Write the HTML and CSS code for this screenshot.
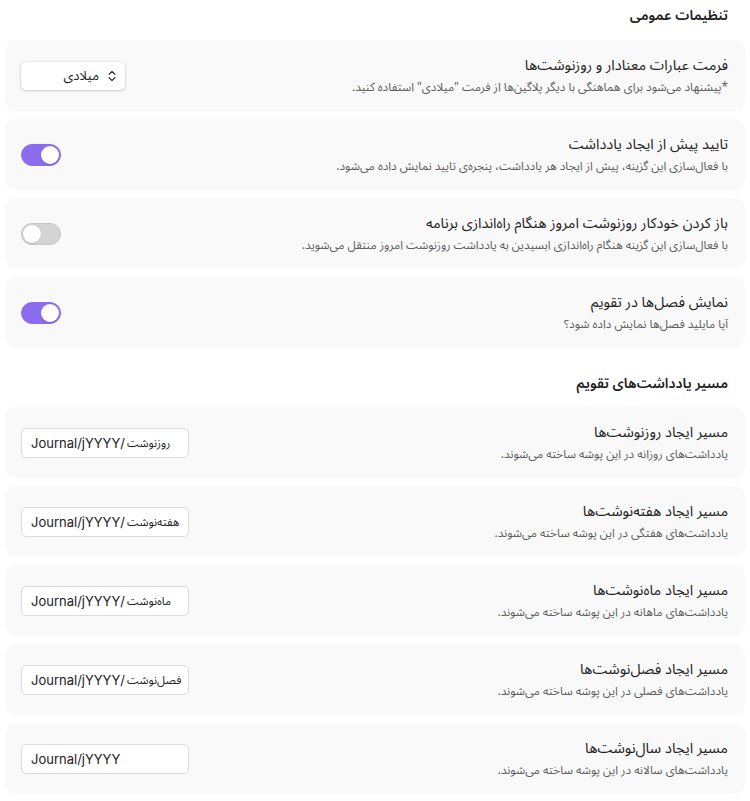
FILE: index.html
```html
<!DOCTYPE html>
<html lang="fa">
<head>
<meta charset="utf-8">
<title>تنظیمات</title>
<link rel="stylesheet" href="styles.css">
</head>
<body>
<div class="page" dir="rtl">
  <h2 class="heading">تنظیمات عمومی</h2>

  <div class="item">
    <div class="info">
      <div class="name">فرمت عبارات معنادار و روزنوشت‌ها</div>
      <div class="desc">*پیشنهاد می‌شود برای هماهنگی با دیگر پلاگین‌ها از فرمت "میلادی" استفاده کنید.</div>
    </div>
    <div class="select">
      <svg class="chev" viewBox="0 0 10 14" width="10" height="14"><path d="M2.2 5.2 L5 2.4 L7.8 5.2 M2.2 8.8 L5 11.6 L7.8 8.8" fill="none" stroke="#333" stroke-width="1.3" stroke-linecap="round" stroke-linejoin="round"/></svg>
      <span>میلادی</span>
    </div>
  </div>

  <div class="item">
    <div class="info">
      <div class="name">تایید پیش از ایجاد یادداشت</div>
      <div class="desc">با فعال‌سازی این گزینه، پیش از ایجاد هر یادداشت، پنجره‌ی تایید نمایش داده می‌شود.</div>
    </div>
    <div class="toggle on"><span class="knob"></span></div>
  </div>

  <div class="item">
    <div class="info">
      <div class="name">باز کردن خودکار روزنوشت امروز هنگام راه‌اندازی برنامه</div>
      <div class="desc">با فعال‌سازی این گزینه هنگام راه‌اندازی ابسیدین به یادداشت روزنوشت امروز منتقل می‌شوید.</div>
    </div>
    <div class="toggle"><span class="knob"></span></div>
  </div>

  <div class="item">
    <div class="info">
      <div class="name">نمایش فصل‌ها در تقویم</div>
      <div class="desc">آیا مایلید فصل‌ها نمایش داده شود؟</div>
    </div>
    <div class="toggle on"><span class="knob"></span></div>
  </div>

  <h2 class="heading second">مسیر یادداشت‌های تقویم</h2>

  <div class="item">
    <div class="info">
      <div class="name">مسیر ایجاد روزنوشت‌ها</div>
      <div class="desc">یادداشت‌های روزانه در این پوشه ساخته می‌شوند.</div>
    </div>
    <div class="text" dir="ltr"><span class="lat">Journal/jYYYY/</span><span class="fa">روزنوشت</span></div>
  </div>

  <div class="item">
    <div class="info">
      <div class="name">مسیر ایجاد هفته‌نوشت‌ها</div>
      <div class="desc">یادداشت‌های هفتگی در این پوشه ساخته می‌شوند.</div>
    </div>
    <div class="text" dir="ltr"><span class="lat">Journal/jYYYY/</span><span class="fa">هفته‌نوشت</span></div>
  </div>

  <div class="item">
    <div class="info">
      <div class="name">مسیر ایجاد ماه‌نوشت‌ها</div>
      <div class="desc">یادداشت‌های ماهانه در این پوشه ساخته می‌شوند.</div>
    </div>
    <div class="text" dir="ltr"><span class="lat">Journal/jYYYY/</span><span class="fa">ماه‌نوشت</span></div>
  </div>

  <div class="item">
    <div class="info">
      <div class="name">مسیر ایجاد فصل‌نوشت‌ها</div>
      <div class="desc">یادداشت‌های فصلی در این پوشه ساخته می‌شوند.</div>
    </div>
    <div class="text" dir="ltr"><span class="lat">Journal/jYYYY/</span><span class="fa">فصل‌نوشت</span></div>
  </div>

  <div class="item">
    <div class="info">
      <div class="name">مسیر ایجاد سال‌نوشت‌ها</div>
      <div class="desc">یادداشت‌های سالانه در این پوشه ساخته می‌شوند.</div>
    </div>
    <div class="text" dir="ltr"><span class="lat">Journal/jYYYY</span></div>
  </div>
</div>
</body>
</html>
```

FILE: styles.css
```css
html, body {
  margin: 0;
  padding: 0;
  background: #ffffff;
}

body {
  font-family: "Noto Sans Arabic", "Noto Sans", "DejaVu Sans", sans-serif;
  color: #222222;
}

.page {
  padding: 5px 5px 0 5px;
  display: flex;
  flex-direction: column;
  gap: 8px;
}

.heading {
  margin: 0 17px 5px 17px;
  font-size: 14px;
  line-height: 22px;
  font-weight: 600;
  color: #222222;
}

.heading.second {
  margin-top: 17px;
  margin-bottom: 4px;
}

.item {
  background: #f9f9f9;
  border-radius: 11px;
  min-height: 71px;
  box-sizing: border-box;
  padding: 0 17px 0 16px;
  display: flex;
  align-items: center;
  justify-content: space-between;
  gap: 16px;
}

.info {
  display: flex;
  flex-direction: column;
  gap: 2px;
}

.name {
  font-size: 14.5px;
  line-height: 22px;
  color: #222222;
}

.desc {
  font-size: 11.8px;
  line-height: 18px;
  color: #5c5c5c;
}

.select {
  width: 104px;
  height: 28px;
  box-sizing: border-box;
  background: #ffffff;
  border-radius: 5px;
  box-shadow: 0 0 0 1px rgba(0, 0, 0, 0.06), 0 1px 3px rgba(0, 0, 0, 0.14);
  display: flex;
  align-items: center;
  gap: 8px;
  padding: 0 8px;
  font-size: 13px;
  color: #222222;
  flex-shrink: 0;
}

.chev {
  display: block;
}

.toggle {
  width: 40px;
  height: 22px;
  box-sizing: border-box;
  border-radius: 11px;
  background: #d4d4d4;
  border: 1px solid #c4c4c4;
  display: flex;
  align-items: center;
  justify-content: flex-end;
  padding: 0 1px;
  flex-shrink: 0;
}

.toggle.on {
  background: #8b6cef;
  border-color: #8b6cef;
  justify-content: flex-start;
}

.knob {
  width: 18px;
  height: 18px;
  border-radius: 50%;
  background: #ffffff;
  box-shadow: 0 1px 1px rgba(0, 0, 0, 0.12);
}

.text {
  width: 168px;
  height: 30px;
  box-sizing: border-box;
  border: 1px solid #dcdcdc;
  border-radius: 5px;
  background: #ffffff;
  padding: 0 9px;
  display: flex;
  align-items: center;
  white-space: nowrap;
  overflow: hidden;
  color: #222222;
  flex-shrink: 0;
}

.lat {
  font-family: Inter, "Noto Sans", sans-serif;
  font-size: 13px;
  padding-right: 2px;
}

.fa {
  font-family: "Noto Sans Arabic", "DejaVu Sans", sans-serif;
  font-size: 11.5px;
}
```
